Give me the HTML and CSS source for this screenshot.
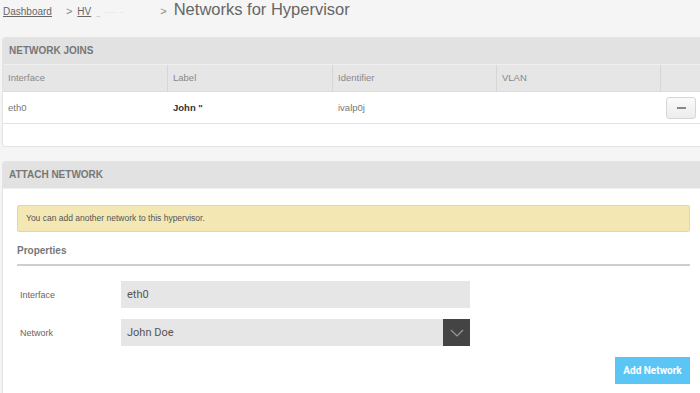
FILE: index.html
```html
<!DOCTYPE html>
<html>
<head>
<meta charset="utf-8">
<link rel="stylesheet" href="styles.css">
</head>
<body>
<div class="page">
  <div class="crumbs">
    <a class="crumb" href="#">Dashboard</a>
    <span class="sep">&gt;</span>
    <a class="crumb" href="#">HV<span class="redact">_ ···· ·</span></a>
    <span class="sep sep2">&gt;</span>
    <span class="title">Networks for Hypervisor</span>
  </div>

  <div class="panel panel-joins">
    <div class="panel-head">NETWORK JOINS</div>
    <div class="table">
      <div class="row thead">
        <div class="cell">Interface</div>
        <div class="cell">Label</div>
        <div class="cell">Identifier</div>
        <div class="cell">VLAN</div>
        <div class="cell cell-act"></div>
      </div>
      <div class="row tbody">
        <div class="cell">eth0</div>
        <div class="cell strong">John "</div>
        <div class="cell">ivalp0j</div>
        <div class="cell"></div>
        <div class="cell cell-act"><button class="minus"><span class="bar"></span></button></div>
      </div>
    </div>
    <div class="joins-foot"></div>
  </div>

  <div class="panel panel-attach">
    <div class="panel-head">ATTACH NETWORK</div>
    <div class="attach-body">
      <div class="alert">You can add another network to this hypervisor.</div>
      <div class="props">Properties</div>
      <div class="form-row">
        <label class="flabel">Interface</label>
        <div class="field">eth0</div>
      </div>
      <div class="form-row">
        <label class="flabel">Network</label>
        <div class="field select">
          <span>John Doe</span>
          <span class="arrow">
            <svg width="14" height="8" viewBox="0 0 14 8"><path d="M1 1 L7 7 L13 1" fill="none" stroke="#9a9a9a" stroke-width="1.2"/></svg>
          </span>
        </div>
      </div>
      <div class="actions">
        <button class="add">Add Network</button>
      </div>
    </div>
  </div>
</div>
</body>
</html>
```

FILE: styles.css
```css
html, body {
  margin: 0;
  padding: 0;
  background: #f5f5f5;
  overflow: hidden;
  font-family: "Liberation Sans", Arial, sans-serif;
}
.page {
  width: 706px;
  padding-left: 2px;
}
.crumbs {
  display: flex;
  align-items: baseline;
  height: 37px;
  padding-left: 1px;
  color: #777;
}
.crumb {
  font-size: 10px;
  color: #666;
  text-decoration: underline;
}
.redact {
  color: #bbb;
  font-size: 7px;
  margin-left: 5px;
  letter-spacing: 1px;
  display: inline-block;
  width: 52px;
}
.sep {
  font-size: 11px;
  margin: 0 5px 0 14px;
  color: #888;
}
.sep2 { margin: 0 7px 0 12px; }
.title {
  font-size: 16.5px;
  color: #666;
}
.panel {
  background: #fff;
  border: 1px solid #e3e3e3;
  border-radius: 3px;
  overflow: hidden;
}
.panel-head {
  background: #e2e2e2;
  height: 26px;
  line-height: 26px;
  padding-left: 6px;
  font-size: 10px;
  font-weight: bold;
  color: #777;
  border-bottom: 1px solid #efefef;
}
.row {
  display: grid;
  grid-template-columns: 165px 165px 164px 164px 1fr;
}
.thead {
  background: #e6e6e6;
  height: 26px;
  border-bottom: 1px solid #ddd;
}
.thead .cell {
  border-right: 1px solid #d6d6d6;
  line-height: 26px;
  font-size: 9.5px;
  color: #888;
  padding-left: 5px;
}
.thead .cell:last-child { border-right: none; }
.tbody {
  height: 31px;
  border-bottom: 1px solid #e2e2e2;
}
.tbody .cell {
  line-height: 31px;
  font-size: 9.5px;
  color: #777;
  padding-left: 5px;
}
.tbody .strong {
  color: #333;
  font-weight: bold;
}
.cell-act {
  display: flex;
  align-items: center;
}
.tbody .cell-act { padding-left: 5px; }
.minus {
  width: 30px;
  height: 22px;
  border: 1px solid #d6d6d6;
  border-radius: 3px;
  background: linear-gradient(#fafafa, #ececec);
  display: flex;
  align-items: center;
  justify-content: center;
  padding: 0;
}
.minus .bar {
  display: block;
  width: 9px;
  height: 2px;
  background: #888;
}
.joins-foot { height: 22px; }
.panel-attach {
  margin-top: 14px;
  height: 260px;
}
.attach-body {
  padding: 16px 17px 0 14px;
}
.alert {
  background: #f3e7b3;
  border: 1px solid #e8d796;
  border-radius: 2px;
  height: 25px;
  line-height: 25px;
  padding-left: 8px;
  font-size: 8.5px;
  color: #555;
}
.props {
  margin-top: 13px;
  padding-bottom: 8px;
  font-size: 10px;
  font-weight: bold;
  color: #777;
  border-bottom: 2px solid #cfcfcf;
}
.form-row {
  display: flex;
  align-items: center;
  margin-top: 15px;
}
.form-row + .form-row { margin-top: 11px; }
.flabel {
  width: 101px;
  padding-left: 3px;
  font-size: 9px;
  color: #666;
}
.field {
  width: 349px;
  height: 27px;
  background: #e6e6e6;
  font-family: Roboto, "Liberation Sans", sans-serif;
  font-size: 11px;
  color: #555;
  display: flex;
  align-items: center;
  padding-left: 6px;
  box-sizing: border-box;
}
.select {
  justify-content: space-between;
  padding-right: 0;
}
.arrow {
  width: 27px;
  height: 27px;
  background: #444;
  display: flex;
  align-items: center;
  justify-content: center;
}
.actions {
  display: flex;
  justify-content: flex-end;
  margin-top: 11px;
}
.add {
  width: 75px;
  height: 27px;
  border: none;
  background: #5bc6f6;
  color: #fff;
  font-family: Roboto, "Liberation Sans", sans-serif;
  font-weight: bold;
  font-size: 10px;
  padding: 0;
}
```
